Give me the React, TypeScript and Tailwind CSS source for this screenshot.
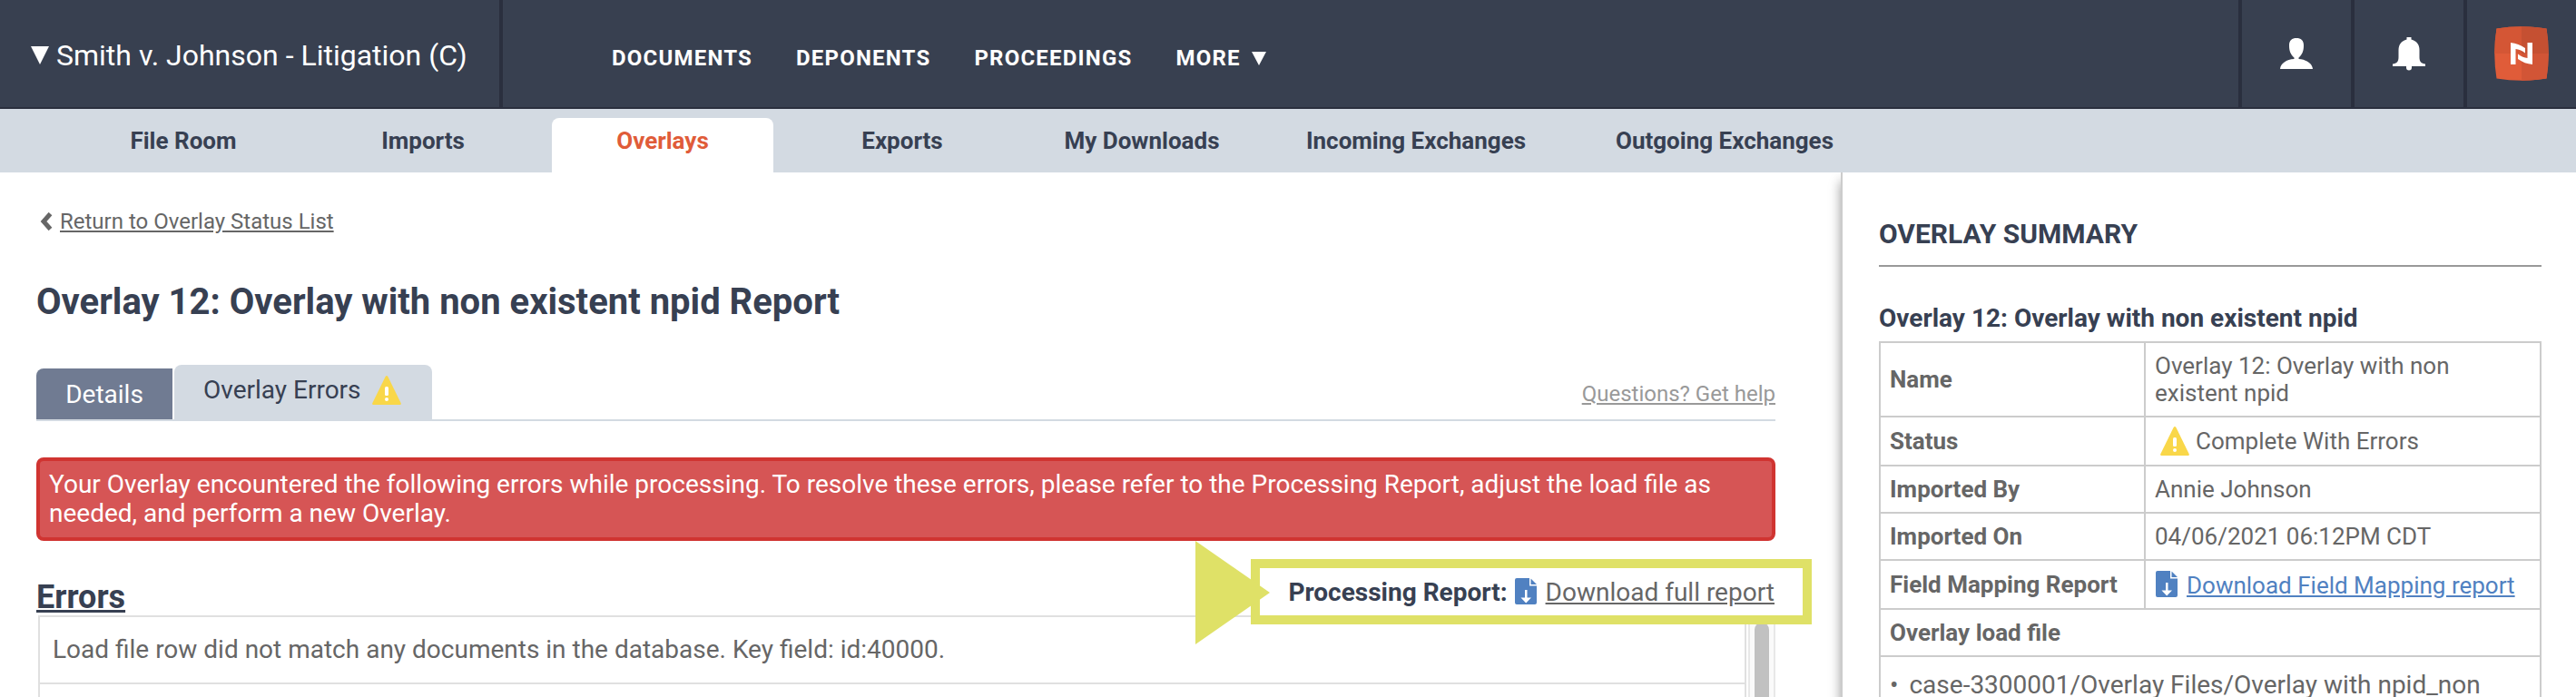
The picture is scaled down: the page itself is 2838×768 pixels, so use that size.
import React from "react";

const subNavItems = [
  { label: "File Room", width: "w-[244px]" },
  { label: "Imports", width: "w-[244px]" },
  { label: "Overlays", width: "w-[244px]" },
  { label: "Exports", width: "w-[244px]" },
  { label: "My Downloads", width: "w-[244px]" },
  { label: "Incoming Exchanges", width: "w-80" },
  { label: "Outgoing Exchanges", width: "w-80" },
];

const CaretDown: React.FC<{ className: string }> = ({ className }) => (
  <svg viewBox="0 0 20 20" preserveAspectRatio="none" className={className} aria-hidden="true">
    <path d="M0 0h20L10 20z" fill="currentColor" />
  </svg>
);

const WarningIcon: React.FC = () => (
  <svg viewBox="0 0 32 32" className="w-8 h-8 shrink-0" aria-hidden="true">
    <path
      d="M14.600 1Q16 -1 17.400 1L31.600 30Q32.400 32 30.600 32H1.400Q-0.400 32 0.400 30Z"
      fill="#f9d749"
    />
    <rect x="14" y="12" width="4" height="10" rx="1.500" fill="#fff" />
    <circle cx="16" cy="26" r="2" fill="#fff" />
  </svg>
);

const FileDownloadIcon: React.FC = () => (
  <svg viewBox="0 0 24 29" className="w-6 h-[29px] shrink-0" aria-hidden="true">
    <path d="M2 0H16V8.500H24V27Q24 29 22 29H2Q0 29 0 27V2Q0 0 2 0Z" fill="#5081c1" />
    <path d="M17.500 0.500 24 7H17.500Z" fill="#5081c1" />
    <path d="M11 13H13.500V21.500H18L12.200 27.500 6.500 21.500H11Z" fill="#fff" />
  </svg>
);

const Header: React.FC = () => (
  <header className="flex h-[120px] bg-[#384050] border-b-2 border-[#2a2f3e] text-white">
    <button
      type="button"
      className="flex items-center gap-2 w-[554px] shrink-0 pl-[34px] pt-1 border-r-4 border-[#2a2f3e] text-[32px] leading-10"
    >
      <CaretDown className="w-5 h-5" />
      <span>Smith v. Johnson - Litigation (C)</span>
    </button>
    <nav className="flex flex-1 items-center gap-12 pl-[120px] pt-[10px] text-2xl font-bold tracking-wider">
      <a href="#documents">DOCUMENTS</a>
      <a href="#deponents">DEPONENTS</a>
      <a href="#proceedings">PROCEEDINGS</a>
      <button type="button" className="flex items-center gap-3 tracking-wider">
        MORE
        <CaretDown className="w-4 h-[15px]" />
      </button>
    </nav>
    <button
      type="button"
      aria-label="Account"
      className="flex items-center justify-center w-[124px] border-l-4 border-[#2a2f3e]"
    >
      <svg viewBox="0 0 36 34" className="w-9 h-[34px]" aria-hidden="true">
        <path
          d="M18 0C23 0 26 2.500 26 8C26 14 24.500 18 20.500 21.500V23C29 23.500 35.500 28 36 34H0C.5 28 7 23.500 15.500 23V21.500C11.500 18 10 14 10 8C10 2.500 13 0 18 0Z"
          fill="currentColor"
        />
      </svg>
    </button>
    <button
      type="button"
      aria-label="Notifications"
      className="flex items-center justify-center w-[124px] border-l-4 border-[#2a2f3e]"
    >
      <svg viewBox="0 0 36 37" className="w-9 h-[37px]" aria-hidden="true">
        <path
          d="M15.500 0H20.500V2.500C26.500 4 29.500 8.500 29.500 14V22C29.500 27 31.500 29 36 29.500V32H21V33.500A3 3 0 0 1 15 33.500V32H0V29.500C4.500 29 6.500 27 6.500 22V14C6.500 8.500 9.500 4 15.500 2.500Z"
          fill="currentColor"
        />
      </svg>
    </button>
    <a
      href="#home"
      aria-label="Home"
      className="flex items-center justify-center w-[124px] border-l-4 border-[#2a2f3e]"
    >
      <svg viewBox="0 0 60 60" className="w-[60px] h-[60px]" aria-hidden="true">
        <path d="M2.500 2.500Q30 -2 57.500 2.500Q62 30 57.500 57.500Q30 62 2.500 57.500Q-2 30 2.500 2.500Z" fill="#e05c39" />
        <path d="M30 0.300Q44 0.300 57.500 2.500Q59.700 16 59.700 30H30Z" fill="#c55032" />
        <path d="M2.500 2.500Q16 0.300 30 0.300V30H0.300Q0.300 16 2.500 2.500Z" fill="#d45635" />
        <path d="M30 30H59.700Q59.700 44 57.500 57.500Q44 59.700 30 59.700Z" fill="#d25536" />
        <path d="M18 18C24 18.500 29 20.500 34 24V29.500C30 26.500 27 25.500 23.500 25V42H18Z" fill="#fff" />
        <path d="M42 42C36 41.500 31 39.500 26 36V30.500C30 33.500 33 34.500 36.500 35V18H42Z" fill="#fff" />
      </svg>
    </a>
  </header>
);

const SubNav: React.FC = () => (
  <nav className="flex items-end gap-5 h-[70px] pl-20 bg-[#d3dae2] text-[26px] leading-8 font-bold text-[#374052]">
    {subNavItems.map(({ label, width }) => (
      <a
        key={label}
        href="#section"
        className={`${width} h-[60px] pt-[9px] text-center ${
          label === "Overlays" ? "rounded-t-lg bg-white text-[#e05c39]" : ""
        }`}
      >
        {label}
      </a>
    ))}
  </nav>
);

const ProcessingReport: React.FC = () => (
  <div className="absolute right-[-40px] top-5 flex items-center h-[72px] pl-[31px] pr-[31px] pt-[2px] border-[10px] border-[#dfe167] bg-white text-[28px] leading-8">
    <svg viewBox="0 0 82 114" className="absolute right-[587px] top-[-30px] w-[82px] h-[114px]" aria-hidden="true">
      <path d="M0 0 82 57 0 114Z" fill="#dfe167" />
    </svg>
    <span className="font-bold text-[#374052]">Processing Report:</span>
    <span className="ml-2 mb-1">
      <FileDownloadIcon />
    </span>
    <a href="#report" className="ml-[10px] underline">
      Download full report
    </a>
  </div>
);

const Main: React.FC = () => (
  <main className="flex-1 pl-10 pr-[72px] pt-[38px]">
    <a href="#overlays" className="flex items-center gap-2 text-2xl">
      <svg viewBox="0 0 14 20" className="w-[14px] h-5 ml-1" aria-hidden="true">
        <path d="M11.500 1.500 4 10l7.500 8.500" fill="none" stroke="currentColor" strokeWidth="5" />
      </svg>
      <span className="underline">Return to Overlay Status List</span>
    </a>
    <h1 className="mt-[49px] text-[40px] leading-[48px] font-bold text-[#374052]">
      Overlay 12: Overlay with non existent npid Report
    </h1>
    <div className="flex items-end mt-[45px] border-b-2 border-[#d3dae2] text-[28px] leading-8">
      <button type="button" className="h-14 w-[150px] pt-[2px] rounded-tl-lg bg-[#707b92] text-white">
        Details
      </button>
      <button
        type="button"
        className="flex items-center gap-3 h-[60px] ml-[2px] pl-8 pr-[34px] pb-1 rounded-t-lg bg-[#d3dae2] text-[#374052]"
      >
        Overlay Errors
        <WarningIcon />
      </button>
      <a href="#help" className="ml-auto mb-3 text-2xl text-[#999] underline">
        Questions? Get help
      </a>
    </div>
    <div
      role="alert"
      className="mt-10 px-[10px] py-[10px] border-4 border-[#d03431] rounded-lg bg-[#d65555] text-[28px] leading-8 text-white"
    >
      Your Overlay encountered the following errors while processing. To resolve these errors, please refer to the
      Processing Report, adjust the load file as needed, and perform a new Overlay.
    </div>
    <div className="relative">
      <h2 className="pt-10 h-[82px] text-4xl leading-[44px] font-bold text-[#374052] underline">Errors</h2>
      <div className="flex h-[90px] pl-[2px] overflow-hidden">
        <table className="flex-1 border-collapse text-[28px] leading-8">
          <tbody>
            <tr>
              <td className="h-[74px] px-[14px] border-2 border-[#e0e0e0]">
                Load file row did not match any documents in the database. Key field: id:40000.
              </td>
            </tr>
            <tr>
              <td className="h-[74px] px-[14px] border-2 border-[#e0e0e0]"></td>
            </tr>
          </tbody>
        </table>
        <div className="w-[30px] ml-[2px] px-[5px] border-x-2 border-[#e8e8e8] bg-[#fafafa]">
          <div className="h-40 mt-2 w-4 rounded-full bg-[#c1c1c1]"></div>
        </div>
      </div>
      <ProcessingReport />
    </div>
  </main>
);

const Summary: React.FC = () => (
  <aside className="w-[810px] shrink-0 pl-10 pr-[38px] pt-[50px] border-l-2 border-[#ccc] shadow-[0_10px_12px_rgba(0,0,0,0.4)] bg-white">
    <h2 className="pb-4 border-b-2 border-[#999] text-[30px] leading-9 font-bold text-[#374052]">OVERLAY SUMMARY</h2>
    <h3 className="mt-[41px] text-[28px] leading-8 font-bold text-[#374052]">
      Overlay 12: Overlay with non existent npid
    </h3>
    <table className="w-full mt-[9px] border-collapse text-[26px] leading-[30px] text-left [&_td]:border-2 [&_td]:border-[#ccc] [&_td]:p-[10px] [&_th]:border-2 [&_th]:border-[#ccc] [&_th]:p-[10px]">
      <tbody>
        <tr>
          <th className="w-[292px]">Name</th>
          <td>
            Overlay 12: Overlay with non
            <br />
            existent npid
          </td>
        </tr>
        <tr>
          <th>Status</th>
          <td>
            <span className="flex items-center gap-[7px] h-8 pl-[6px]">
              <WarningIcon />
              Complete With Errors
            </span>
          </td>
        </tr>
        <tr>
          <th>Imported By</th>
          <td>Annie Johnson</td>
        </tr>
        <tr>
          <th>Imported On</th>
          <td>04/06/2021 06:12PM CDT</td>
        </tr>
        <tr>
          <th>Field Mapping Report</th>
          <td>
            <span className="flex items-center gap-[10px] h-8 pl-[1px] pt-[2px] text-[#5081c1]">
              <span className="mb-1">
                <FileDownloadIcon />
              </span>
              <a href="#mapping" className="underline">
                Download Field Mapping report
              </a>
            </span>
          </td>
        </tr>
        <tr>
          <th colSpan={2}>Overlay load file</th>
        </tr>
        <tr>
          <td colSpan={2}>
            <ul className="pt-[6px] text-[28px]">
              <li className="flex gap-3">
                <span>•</span>
                case-3300001/Overlay Files/Overlay with npid_non
              </li>
            </ul>
          </td>
        </tr>
      </tbody>
    </table>
  </aside>
);

const App: React.FC = () => {
  return (
    <div className="h-screen overflow-hidden flex flex-col bg-white text-[#666] font-['Roboto',sans-serif]">
      <Header />
      <SubNav />
      <div className="flex flex-1 min-h-0 overflow-hidden">
        <Main />
        <Summary />
      </div>
    </div>
  );
};

export default App;
